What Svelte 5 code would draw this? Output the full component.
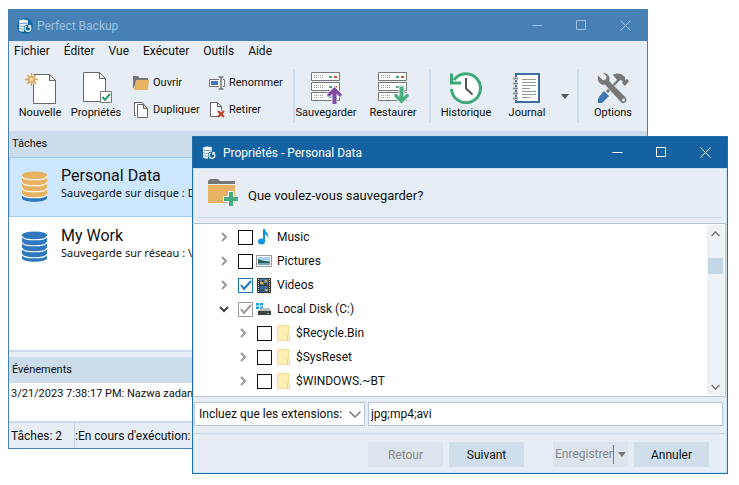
<script>
  const menus = ['Fichier', 'Éditer', 'Vue', 'Exécuter', 'Outils', 'Aide'];

  const tasks = [
    { name: 'Personal Data', info: 'Sauvegarde sur disque : D:\\', color: '#e8b263', selected: true },
    { name: 'My Work', info: 'Sauvegarde sur réseau : \\\\', color: '#2f78bf', selected: false }
  ];

  let tree = $state([
    { name: 'Music', icon: 'music', level: 0, checked: false },
    { name: 'Pictures', icon: 'picture', level: 0, checked: false },
    { name: 'Videos', icon: 'video', level: 0, checked: true },
    { name: 'Local Disk (C:)', icon: 'disk', level: 0, checked: true, partial: true, open: true },
    { name: '$Recycle.Bin', icon: 'folder', level: 1, checked: false },
    { name: '$SysReset', icon: 'folder', level: 1, checked: false },
    { name: '$WINDOWS.~BT', icon: 'folder', level: 1, checked: false }
  ]);

  let extensions = $state('jpg;mp4;avi');
</script>

{#snippet logo()}
  <svg class="logo" width="16" height="16" viewBox="0 0 16 16">
    <circle cx="8" cy="8" r="8" fill="#1268a3" />
    <path d="M2 3.500h9V7H9l-2 3v3.500c-3 0-4.500-.5-5-1.500z" fill="#fff" />
    <ellipse cx="6.500" cy="3.300" rx="4.500" ry="1.700" fill="#fff" />
    <path d="M2 4.500c1 1.500 8 1.500 9 0M2 7.300c1 1.300 4 1.300 7 .8M2 10c1 1.300 3 1.300 5 1" fill="none" stroke="#1268a3" stroke-width=".7" />
    <circle cx="11" cy="10.500" r="4" fill="#1268a3" />
    <path d="M9.500 8a2.900 2.900 0 1 0 3 0M12 10V7.500h2" fill="none" stroke="#fff" stroke-width="1.200" />
  </svg>
{/snippet}

{#snippet caption()}
  <div class="caption">
    <button aria-label="Réduire"><svg width="11" height="11"><path d="M.5 5.500h10" /></svg></button>
    <button aria-label="Agrandir"><svg width="11" height="11"><path d="M.5.5h9v9h-9z" /></svg></button>
    <button aria-label="Fermer"><svg width="11" height="11"><path d="M.5.5l10 10M10.500.5l-10 10" /></svg></button>
  </div>
{/snippet}

{#snippet server(arrow, color)}
  <svg width="32" height="32" viewBox="0 0 32 32">
    {#each [0, 10, 20] as y}
      <g transform="translate(1 {y})">
        <path d="M.5.5h28v8H.5z" fill="#fff" stroke="#777" />
        <path d="M3 3.500h10M3 5.500h10" stroke="#999" stroke-dasharray="1 1" />
        <path d="M18 4h3v2h-3z" fill="#43a57c" />
        <path d="M23 4h3v2h-3z" fill="#c4532c" />
      </g>
    {/each}
    <path d={arrow} fill={color} stroke="#e6edf4" stroke-width="2" paint-order="stroke" />
  </svg>
{/snippet}

{#snippet treeIcon(kind)}
  {#if kind === 'music'}
    <svg width="16" height="16" viewBox="0 0 16 16">
      <ellipse cx="5.500" cy="12.500" rx="3.500" ry="2.900" fill="#1594e0" />
      <path d="M7 0h2c0 3 4 4 3.500 9.500C12 7 10.500 6 9 5.500v7.500H7z" fill="#1594e0" />
    </svg>
  {:else if kind === 'picture'}
    <svg width="16" height="12" viewBox="0 0 16 12">
      <path d="M.5.5h15v11H.5z" fill="#fff" stroke="#999" />
      <path d="M2 2h12v4H2z" fill="#a9d4ef" />
      <path d="M2 6h12v4H2z" fill="#6da8c4" />
      <path d="M2 4l4 1.500 8 1.500v1H2z" fill="#2e5c55" />
    </svg>
  {:else if kind === 'video'}
    <svg width="14" height="15" viewBox="0 0 14 15">
      <path d="M0 0h14v15H0z" fill="#333" />
      <path d="M1.500 1v14M12.500 1v14" stroke="#eee" stroke-dasharray="1 1" />
      <path d="M3 1h8v6H3z" fill="#5181b2" />
      <path d="M3 8h8v6H3z" fill="#376d9f" />
      <path d="M3 4h3v2H3zM8 11h3v2H8zM8 2h2v2H8z" fill="#d6a63a" />
      <path d="M5 2h2v2H5zM4 11h3v2H4zM7 5h3v2H7z" fill="#334f2e" />
    </svg>
  {:else if kind === 'disk'}
    <svg width="16" height="14" viewBox="0 0 16 14">
      <path d="M0 1h3v2.500H0zM4 1h3v2.500H4zM0 4.500h3V7H0zM4 4.500h3V7H4z" fill="#19a3dd" />
      <path d="M3 8l2-2h8l2 3H2z" fill="#b9bcbf" />
      <path d="M2 9h13v4H2z" fill="#3d4144" />
      <path d="M11 11h2v1h-2z" fill="#5fe06a" />
    </svg>
  {:else}
    <svg width="13" height="16" viewBox="0 0 13 16">
      <path d="M.5.5h11v15H.5z" fill="#ffefb4" stroke="#f1dc98" />
      <path d="M10.500 9.500h2v6h-2z" fill="#fff3c8" stroke="#ecd58a" />
    </svg>
  {/if}
{/snippet}

<div class="desktop">
  <section class="window main">
    <header class="titlebar">
      {@render logo()}
      <span class="title">Perfect Backup</span>
      {@render caption()}
    </header>

    <nav class="menubar">
      {#each menus as item}
        <button>{item}</button>
      {/each}
    </nav>

    <div class="toolbar">
      <button class="tool">
        <svg width="32" height="32" viewBox="0 0 32 32">
          <path d="M9.500 2.500h16l6 6v23h-22z" fill="#fff" stroke="#666" />
          <path d="M25.500 2.500v6h6" fill="none" stroke="#666" />
          <circle cx="7.500" cy="7.500" r="5" fill="#e6edf4" />
          <path d="M7.500 1v13M1 7.500h13M3 3l9 9M12 3l-9 9" stroke="#e5a044" stroke-width="1.300" />
          <circle cx="7.500" cy="7.500" r="2.800" fill="#fbe8c8" stroke="#e5a044" stroke-width="1.500" />
        </svg>
        Nouvelle
      </button>
      <button class="tool">
        <svg width="32" height="32" viewBox="0 0 32 32">
          <path d="M3.500.5h16l6 6v23h-22z" fill="#fff" stroke="#666" />
          <path d="M19.500.5v6h6" fill="none" stroke="#666" />
          <path d="M20.500 19.500h11v11h-11z" fill="#fff" stroke="#777" />
          <path d="M22.500 25l2.500 3 5-6" fill="none" stroke="#2f9b6d" stroke-width="2" />
        </svg>
        Propriétés
      </button>

      <div class="smalltools">
        <button>
          <svg width="16" height="16" viewBox="0 0 16 16">
            <path d="M0 14V1h5l1.500 2H15v3H4z" fill="#777" />
            <path d="M3 5h13l-1 10H1z" fill="#e8b263" />
          </svg>
          Ouvrir
        </button>
        <button>
          <svg width="16" height="16" viewBox="0 0 16 16">
            <path d="M10 4.500H.5v7H10M14 4.500h1.500v7H14" fill="#fff" stroke="#777" />
            <path d="M2 6h7v4H2z" fill="#3d77b5" />
            <path d="M12 2.500v11M9.500 2h5M9.500 14h5" fill="none" stroke="#777" stroke-width="1.500" />
          </svg>
          Renommer
        </button>
        <button>
          <svg width="16" height="16" viewBox="0 0 16 16">
            <path d="M3 13.500H1.500v-13h8l2 2" fill="#fff" stroke="#666" />
            <path d="M4.500 2.500h6l4 4v9h-10z" fill="#fff" stroke="#666" />
            <path d="M10.500 2.500v4h4" fill="none" stroke="#666" />
          </svg>
          Dupliquer
        </button>
        <button>
          <svg width="16" height="16" viewBox="0 0 16 16">
            <path d="M1.500.5h7l4 4v10h-11z" fill="#fff" stroke="#666" />
            <path d="M8.500.5v4h4" fill="none" stroke="#666" />
            <path d="M9 9l6 6M15 9l-6 6" stroke="#e6edf4" stroke-width="4" />
            <path d="M9 9l6 6M15 9l-6 6" stroke="#c23a1c" stroke-width="2" />
          </svg>
          Retirer
        </button>
      </div>

      <i class="sep"></i>
      <button class="tool">{@render server('M24.500 15l7 7v2.500h-2l-3-3V32h-4V21.500l-3 3h-2V22z', '#804aa3')}Sauvegarder</button>
      <button class="tool">{@render server('M24.500 31.500l-7-7V22h2l3 3V14.500h4V25l3-3h2v2.500z', '#4cae83')}Restaurer</button>
      <i class="sep"></i>
      <button class="tool">
        <svg width="32" height="32" viewBox="0 0 32 32">
          <circle cx="16" cy="16" r="14" fill="#fff" />
          <path d="M4 8A14.500 14.500 0 1 1 1.500 17" fill="none" stroke="#3fa879" stroke-width="3" />
          <path d="M1.500 1.500v9.500h9.500" fill="none" stroke="#3fa879" stroke-width="3" />
          <path d="M16 6v10.500l6.500 6" fill="none" stroke="#555" stroke-width="2" />
        </svg>
        Historique
      </button>
      <button class="tool">
        <svg width="28" height="32" viewBox="0 0 28 32">
          <path d="M3 2h23v28H3z" fill="#fff" stroke="#3c6ca5" stroke-width="2" />
          <path d="M9 7.500h14M9 10.500h14M9 13.500h14M9 16.500h8M9 19.500h14M9 22.500h14M9 25.500h8" stroke="#999" />
          <path d="M0 6.500h5M0 11.500h5M0 16.500h5M0 21.500h5M0 26.500h5" stroke="#fff" stroke-width="3" />
          <path d="M0 6.500h5M0 11.500h5M0 16.500h5M0 21.500h5M0 26.500h5" stroke="#888" stroke-width="2" />
        </svg>
        Journal
      </button>
      <button class="more" aria-label="Plus"><svg width="8" height="5"><path d="M0 0h8l-4 5z" fill="#555" /></svg></button>
      <i class="sep"></i>
      <button class="tool">
        <svg width="32" height="32" viewBox="0 0 32 32">
          <path d="M16 3c3-2.500 8-2 12 2v3l2-1 2 2-4 5-3-3 1-2-3-1-12 13-2-2L20 8z" fill="#777" />
          <path d="M7 19l5 5-6 6c-1 1-2 1-3 1H1v-2c0-1 0-2 1-4z" fill="#3d77b5" />
          <path d="M1 3l5 5 3-1V4L5.500 1C10 0 14 4 12.500 9l16 16c4 4-2 9-5 5L8 13C3 14-1 9 1 3z" fill="#777" stroke="#e6edf4" stroke-width=".7" />
          <circle cx="26.500" cy="28" r="1.400" fill="#e6edf4" />
        </svg>
        Options
      </button>
    </div>

    <h2 class="panel">Tâches</h2>
    <div class="tasks">
      {#each tasks as task}
        <button class="task" class:selected={task.selected}>
          <svg width="25" height="32" viewBox="0 0 25 32">
            <path d="M0 4v23c0 5 25 5 25 0V4z" fill="#2f78bf" />
            <path d="M0 4v19c0 5 25 5 25 0V4z" fill={task.color} />
            <ellipse cx="12.500" cy="4" rx="12.500" ry="3.500" fill={task.color} />
            <path d="M0 5c1 5 24 5 25 0M0 11c1 5 24 5 25 0M0 17c1 5 24 5 25 0M0 23c1 5 24 5 25 0" fill="none" stroke="#fff" stroke-width="1.200" />
          </svg>
          <span>
            <strong>{task.name}</strong>
            <small>{task.info}</small>
          </span>
        </button>
      {/each}
    </div>

    <h2 class="panel events-title">Événements</h2>
    <div class="events">3/21/2023 7:38:17 PM: Nazwa zadania</div>
    <footer class="status">
      <span>Tâches: 2</span>
      <span>:En cours d'exécution:</span>
    </footer>
  </section>

  <section class="window dialog">
    <header class="titlebar">
      {@render logo()}
      <span class="title">Propriétés - Personal Data</span>
      {@render caption()}
    </header>

    <div class="body">
      <div class="question">
        <svg width="32" height="28" viewBox="0 0 32 28">
          <path d="M0 5V2l2-2h8l2 2h15v3z" fill="#777" />
          <path d="M0 6h27v18H0z" fill="#e8b263" />
          <path d="M21 13h4v5h5v4h-5v5h-4v-5h-5v-4h5z" fill="#47a981" stroke="#e6edf4" stroke-width="2" paint-order="stroke" />
        </svg>
        <h1>Que voulez-vous sauvegarder?</h1>
      </div>

      <div class="treebox">
        <ul>
          {#each tree as node}
            <li class:child={node.level === 1}>
              <button class="expander" class:open={node.open} aria-label="Développer {node.name}">
                <svg width="10" height="10"><path d="M3 1l4 4-4 4" /></svg>
              </button>
              <label>
                <span class="box">
                  <input type="checkbox" class:partial={node.partial} bind:checked={node.checked} />
                  {#if node.checked}
                    <svg width="15" height="15"><path d="M3 7l3 4 7-8" stroke={node.partial ? '#999' : '#1a78c2'} /></svg>
                  {/if}
                </span>
                <span class="icon">{@render treeIcon(node.icon)}</span>
                {node.name}
              </label>
            </li>
          {/each}
        </ul>
        <div class="scrollbar">
          <button aria-label="Défiler vers le haut"><svg width="9" height="6"><path d="M.5 5l4-4 4 4" /></svg></button>
          <i></i>
          <button aria-label="Défiler vers le bas"><svg width="9" height="6"><path d="M.5 1l4 4 4-4" /></svg></button>
        </div>
      </div>

      <div class="filter">
        <div class="combo">
          <select aria-label="Filtre">
            <option>Incluez que les extensions:</option>
          </select>
          <svg width="12" height="7"><path d="M.5.5L6 6l5.500-5.500" /></svg>
        </div>
        <input type="text" aria-label="Extensions" bind:value={extensions} />
      </div>

      <footer class="actions">
        <button class="action" disabled>Retour</button>
        <button class="action">Suivant</button>
        <button class="action split" disabled>
          <span>Enregistrer</span>
          <svg width="8" height="5"><path d="M0 0h8l-4 5z" fill="#777" /></svg>
        </button>
        <button class="action">Annuler</button>
      </footer>
    </div>
  </section>
</div>

<style>
  :global(body) {
    margin: 0;
    background: #fff;
  }
  .desktop {
    position: relative;
    display: flex;
    min-height: 100vh;
    box-sizing: border-box;
    padding: 9px 91px 36px 8px;
    font-family: "Segoe UI", Roboto, "Noto Sans", sans-serif;
    font-size: 12px;
    line-height: 16px;
    color: #111;
  }
  button, input, select {
    font: inherit;
    color: inherit;
  }
  button {
    border: 0;
    padding: 0;
    background: none;
  }
  svg {
    display: block;
    flex-shrink: 0;
  }
  .window {
    display: flex;
    flex-direction: column;
    box-sizing: border-box;
    background: #e6edf4;
  }
  .main {
    flex: 1;
    min-width: 0;
    border: 1px solid #4680b4;
  }
  .dialog {
    position: absolute;
    left: 192px;
    right: 11px;
    top: 136px;
    border: 1px solid #216fa9;
  }
  .titlebar {
    display: flex;
    align-items: center;
    height: 31px;
    padding-left: 8px;
    background: #4680b4;
    color: #9dc0e0;
  }
  .dialog .titlebar {
    background: #1562a2;
    color: #fff;
  }
  .title {
    flex: 1;
    margin-left: 4px;
    white-space: nowrap;
  }
  .dialog .title {
    margin-left: 6px;
  }
  .caption {
    display: flex;
    align-self: stretch;
  }
  .caption button {
    display: grid;
    place-items: center;
    width: 44px;
  }
  .caption path {
    fill: none;
    stroke: currentColor;
  }
  .menubar {
    display: flex;
    gap: 14px;
    padding: 2px 5px;
  }
  .toolbar {
    display: grid;
    grid-template-columns: 54px 58px 168px 2px 62px 72px 2px 70px 52px 24px 2px 68px;
    height: 50px;
    padding: 8px 0 12px 4px;
    font-size: 11px;
  }
  .tool {
    display: flex;
    flex-direction: column;
    align-items: center;
    gap: 2px;
    padding-top: 3px;
    line-height: 14px;
    white-space: nowrap;
  }
  .smalltools {
    display: grid;
    grid-template-columns: 76px 84px;
    grid-auto-rows: 27px;
    padding-left: 8px;
  }
  .smalltools button {
    display: flex;
    align-items: center;
    gap: 4px;
  }
  .sep {
    background: #ccdbe9;
  }
  .more {
    display: grid;
    place-items: center;
  }
  .panel {
    margin: 0;
    padding: 5px 3px;
    background: #cddceb;
    font-size: 11px;
    font-weight: normal;
  }
  .tasks {
    flex: 1;
    background: #fff;
    border-bottom: 2px solid #cddceb;
  }
  .task {
    display: flex;
    align-items: center;
    gap: 14px;
    width: 100%;
    height: 60px;
    padding: 0 12px;
    border: 1px solid transparent;
    text-align: left;
  }
  .selected {
    background: #cde7ff;
    border-color: #99cdf2;
  }
  .task span {
    display: flex;
    flex-direction: column;
    padding-bottom: 8px;
  }
  strong {
    font-size: 16px;
    font-weight: normal;
    line-height: 20px;
  }
  small {
    font-family: "Noto Sans", sans-serif;
    font-size: 11px;
    line-height: 14px;
  }
  .events-title {
    margin-top: 5px;
  }
  .events {
    min-height: 34px;
    padding: 3px 2px 1px;
    background: #fff;
    border-bottom: 2px solid #cddceb;
    font-size: 11px;
  }
  .status {
    display: flex;
    height: 25px;
    line-height: 26px;
  }
  .status span:first-child {
    width: 63px;
    padding-left: 2px;
    border-right: 1px solid #c0d2e4;
  }
  .body {
    border: 1px solid #cbe4f5;
  }
  .question {
    display: flex;
    align-items: center;
    gap: 8px;
    height: 48px;
    margin: 0 5px 5px 4px;
    padding-left: 10px;
    border-bottom: 1px solid #c6d9ea;
  }
  h1 {
    margin: 0;
    padding-top: 6px;
    font-size: 13px;
    font-weight: normal;
  }
  .treebox {
    display: flex;
    padding: 1px;
    border: 1px solid #b5c5d3;
    border-left-width: 0;
    background: #fff;
  }
  ul {
    flex: 1;
    margin: 0;
    padding: 0 0 2px 24px;
    list-style: none;
  }
  li {
    display: flex;
    align-items: center;
    height: 24px;
  }
  .child {
    padding-left: 19px;
  }
  .expander {
    margin-right: 9px;
  }
  .expander path {
    fill: none;
    stroke: #999;
    stroke-width: 2;
  }
  .open {
    transform: rotate(90deg);
  }
  .expander.open path {
    stroke: #444;
  }
  label {
    display: flex;
    align-items: center;
  }
  .box {
    display: grid;
  }
  .box > * {
    grid-area: 1 / 1;
  }
  .box input {
    appearance: none;
    width: 15px;
    height: 15px;
    margin: 0;
    border: 1px solid #111;
    background: #fff;
  }
  .box input:checked {
    border-color: #1a78c2;
  }
  .box .partial:checked {
    border-color: #999;
  }
  .box svg {
    pointer-events: none;
    fill: none;
    stroke-width: 2;
  }
  .icon {
    display: grid;
    place-items: center;
    width: 16px;
    margin: 0 5px 0 3px;
  }
  .scrollbar {
    display: flex;
    flex-direction: column;
    width: 17px;
    background: #edf2f7;
  }
  .scrollbar button {
    display: grid;
    place-items: center;
    height: 17px;
  }
  .scrollbar path, .combo path {
    fill: none;
    stroke: #777;
    stroke-width: 1.5;
  }
  .scrollbar i {
    height: 16px;
    margin: 16px 1px auto;
    background: #c4d7e8;
  }
  .filter {
    display: flex;
    gap: 3px;
    padding: 5px 3px 7px 0;
    border-bottom: 1px solid #c6d9ea;
  }
  .combo {
    display: grid;
    align-items: center;
    width: 171px;
  }
  .combo > * {
    grid-area: 1 / 1;
  }
  .combo svg {
    justify-self: end;
    margin-right: 4px;
    pointer-events: none;
  }
  select, .filter input {
    appearance: none;
    box-sizing: border-box;
    width: 100%;
    height: 24px;
    margin: 0;
    padding: 0 4px;
    border: 1px solid #b5c5d3;
    border-radius: 0;
    background: #fff;
  }
  .filter input {
    flex: 1;
    width: auto;
    min-width: 0;
    padding: 0 2px;
  }
  .actions {
    display: flex;
    justify-content: flex-end;
    gap: 6px;
    padding: 8px 17px 5px;
  }
  .action {
    width: 75px;
    height: 25px;
    background: #d0deeb;
  }
  .action:disabled {
    background: #dce5ed;
    color: #888;
  }
  .split {
    display: flex;
    align-items: center;
    gap: 4px;
    margin-left: 23px;
    padding-left: 2px;
  }
  .split span {
    height: 19px;
    line-height: 19px;
    border-right: 1px solid #777;
  }
</style>
